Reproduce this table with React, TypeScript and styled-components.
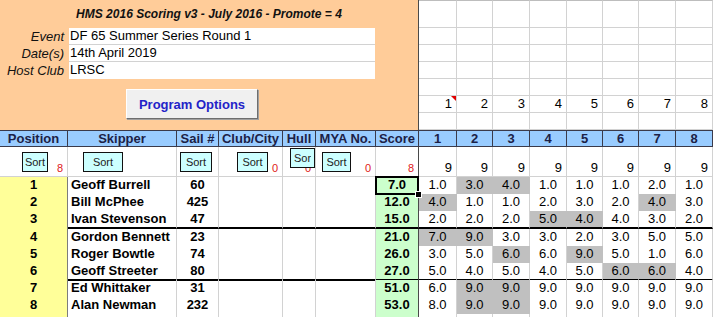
import React from "react";
import styled, { createGlobalStyle } from "styled-components";

const GRID = "#d2d2d2";
const FREEZE = "#4a4a4a";
const HEAD_LINE = "#3a3a4a";

const INFO_WIDTHS = [68, 109, 42, 64, 33, 60, 43];
const RACE_WIDTHS = [38, 36, 37, 37, 36, 36, 37, 37];
const px = (ws: number[]) => ws.map((w) => `${w}px`).join(" ");
const ALL_COLUMNS = px([...INFO_WIDTHS, ...RACE_WIDTHS]);
const RACE_COLUMNS = px(RACE_WIDTHS);

const GlobalStyle = createGlobalStyle`
  html, body { margin: 0; padding: 0; background: #fff; }
  body {
    font-family: "Liberation Sans", Arial, Helvetica, sans-serif;
    font-size: 13px;
    color: #000;
  }
  #root { width: 713px; height: 317px; overflow: hidden; }
`;

const Sheet = styled.div`
  width: 713px;
  display: flex;
  flex-direction: column;
`;

/* ---------- event banner and race-number strip ---------- */

const Top = styled.div`
  display: flex;
  height: 130px;
`;

const Banner = styled.div`
  width: 419px;
  flex: none;
  box-sizing: border-box;
  background: #ffcc99;
  border-right: 1px solid ${FREEZE};
  display: flex;
  flex-direction: column;
`;

const Title = styled.div`
  height: 28px;
  display: flex;
  align-items: center;
  justify-content: center;
  font-weight: bold;
  font-style: italic;
  font-size: 12px;
  color: #111;
`;

const InfoForm = styled.div`
  display: grid;
  grid-template-columns: 69px 306px;
  grid-auto-rows: 17px;
`;

const InfoLabel = styled.div`
  font-style: italic;
  text-align: right;
  padding-right: 5px;
  line-height: 17px;
  color: #111;
`;

const InfoValue = styled.div<{ $last?: boolean }>`
  box-sizing: border-box;
  background: #fff;
  padding-left: 1px;
  line-height: 16px;
  border-bottom: 1px solid ${(p) => (p.$last ? "#fff" : GRID)};
`;

const ButtonRow = styled.div`
  padding: 10px 0 0 126px;
`;

const OptionsButton = styled.button`
  width: 132px;
  height: 30px;
  box-sizing: border-box;
  background: #f0f0f0;
  border: 1px solid;
  border-color: #ffffff #6e6e6e #6e6e6e #ffffff;
  box-shadow: 1px 1px 0 #a0a0a0;
  font-family: inherit;
  font-size: 13px;
  font-weight: bold;
  color: #2323c8;
  padding: 0;
`;

const RaceStrip = styled.div`
  flex: 1;
  display: grid;
  grid-template-columns: ${RACE_COLUMNS};
  grid-template-rows: 28px repeat(6, 17px);
`;

const StripCell = styled.div<{ $top?: boolean }>`
  position: relative;
  box-sizing: border-box;
  border-right: 1px solid ${GRID};
  border-bottom: 1px solid ${GRID};
  border-top: ${(p) => (p.$top ? `1px solid #bdbdbd` : "none")};
  text-align: right;
  padding-right: 4px;
  line-height: 16px;
`;

const CommentMark = styled.span`
  position: absolute;
  top: 0;
  right: 0;
  width: 0;
  height: 0;
  border-top: 5px solid #e00000;
  border-left: 5px solid transparent;
`;

/* ---------- column headings ---------- */

const HeadRow = styled.div`
  display: grid;
  grid-template-columns: ${ALL_COLUMNS};
  height: 17px;
  box-sizing: border-box;
  background: #99ccff;
  border-top: 1px solid ${HEAD_LINE};
  border-bottom: 1px solid ${HEAD_LINE};
`;

const HeadCell = styled.div`
  box-sizing: border-box;
  border-right: 1px solid ${HEAD_LINE};
  text-align: center;
  font-weight: bold;
  line-height: 15px;
  color: #1c2146;
  white-space: nowrap;
  overflow: hidden;
`;

/* ---------- sort buttons row ---------- */

const SortRow = styled.div`
  display: grid;
  grid-template-columns: ${ALL_COLUMNS};
  height: 30px;
  box-sizing: border-box;
  border-bottom: 1px solid ${GRID};
`;

const SortCell = styled.div<{ $edge?: string }>`
  position: relative;
  box-sizing: border-box;
  border-right: 1px solid ${(p) => p.$edge ?? GRID};
  display: flex;
  align-items: flex-start;
`;

const SortButton = styled.button<{ $w: number; $x: number; $y: number }>`
  position: relative;
  z-index: 1;
  width: ${(p) => p.$w}px;
  height: 20px;
  margin: ${(p) => p.$y}px 0 0 ${(p) => p.$x}px;
  box-sizing: border-box;
  background: #ccffff;
  border: 1px solid #111;
  padding: 0;
  font-family: inherit;
  font-size: 11px;
  color: #222;
  display: flex;
  align-items: center;
  justify-content: center;
  overflow: hidden;
`;

/* the Hull button is too narrow for its caption, so the caption is cut */
const ClippedLabel = styled.span<{ $w: number }>`
  display: block;
  width: ${(p) => p.$w}px;
  overflow: hidden;
  white-space: nowrap;
  margin-top: -1px;
`;

const Count = styled.span`
  position: absolute;
  right: 4px;
  bottom: 2px;
  font-size: 11px;
  line-height: 11px;
  color: #e01818;
`;

const Rounds = styled.div`
  box-sizing: border-box;
  border-right: 1px solid ${GRID};
  display: flex;
  align-items: flex-end;
  justify-content: flex-end;
  padding: 0 4px 1px 0;
  line-height: 15px;
`;

/* ---------- results ---------- */

const DataRow = styled.div<{ $h: number }>`
  display: grid;
  grid-template-columns: ${ALL_COLUMNS};
  height: ${(p) => p.$h}px;
`;

const Cell = styled.div<{ $sep?: boolean }>`
  box-sizing: border-box;
  border-right: 1px solid ${GRID};
  border-bottom: ${(p) => (p.$sep ? "2px solid #000" : "none")};
  line-height: 16px;
  white-space: nowrap;
  overflow: hidden;
`;

const PosCell = styled(Cell)`
  background: #ffff99;
  border-right-color: #7c7c7c;
  text-align: center;
  font-weight: bold;
`;

const NameCell = styled(Cell)`
  font-weight: bold;
  padding-left: 3px;
`;

const SailCell = styled(Cell)`
  font-weight: bold;
  text-align: center;
`;

const ScoreCell = styled(Cell)<{ $active?: boolean }>`
  position: relative;
  overflow: visible;
  z-index: ${(p) => (p.$active ? 2 : 0)};
  background: #ccffcc;
  border-right-color: ${FREEZE};
  text-align: center;
  font-weight: bold;

  &::before {
    content: "";
    display: ${(p) => (p.$active ? "block" : "none")};
    position: absolute;
    inset: -1px -1px -1px -1px;
    border: 2px solid #000;
  }
  &::after {
    content: "";
    display: ${(p) => (p.$active ? "block" : "none")};
    position: absolute;
    right: -4px;
    bottom: -4px;
    width: 5px;
    height: 5px;
    background: #000;
    border: 1px solid #fff;
  }
`;

const RaceCell = styled(Cell)<{ $shade?: boolean }>`
  text-align: center;
  background: ${(p) => (p.$shade ? "#c0c0c0" : "#fff")};
  border-right-color: ${(p) => (p.$shade ? "#c0c0c0" : GRID)};
`;

/* ---------- data ---------- */

type Sort = { w: number; x: number; y: number; count?: string; clip?: number };

const HEADINGS = ["Position", "Skipper", "Sail #", "Club/City", "Hull", "MYA No.", "Score"];

const SORTS: (Sort | null)[] = [
  { w: 26, x: 22, y: 5, count: "8" },
  { w: 40, x: 15, y: 5 },
  { w: 32, x: 3, y: 5 },
  { w: 31, x: 18, y: 5, count: "0" },
  { w: 26, x: 7, y: 1, count: "0", clip: 17 },
  { w: 29, x: 6, y: 5, count: "0" },
  null,
];

type Entry = { skipper: string; sail: string; score: string; races: string[]; dropped: number[] };

const RESULTS: Entry[] = [
  { skipper: "Geoff Burrell", sail: "60", score: "7.0", races: ["1.0", "3.0", "4.0", "1.0", "1.0", "1.0", "2.0", "1.0"], dropped: [1, 2] },
  { skipper: "Bill McPhee", sail: "425", score: "12.0", races: ["4.0", "1.0", "1.0", "2.0", "3.0", "2.0", "4.0", "3.0"], dropped: [0, 6] },
  { skipper: "Ivan Stevenson", sail: "47", score: "15.0", races: ["2.0", "2.0", "2.0", "5.0", "4.0", "4.0", "3.0", "2.0"], dropped: [3, 4] },
  { skipper: "Gordon Bennett", sail: "23", score: "21.0", races: ["7.0", "9.0", "3.0", "3.0", "2.0", "3.0", "5.0", "5.0"], dropped: [0, 1] },
  { skipper: "Roger Bowtle", sail: "74", score: "26.0", races: ["3.0", "5.0", "6.0", "6.0", "9.0", "5.0", "1.0", "6.0"], dropped: [2, 4] },
  { skipper: "Geoff Streeter", sail: "80", score: "27.0", races: ["5.0", "4.0", "5.0", "4.0", "5.0", "6.0", "6.0", "4.0"], dropped: [5, 6] },
  { skipper: "Ed Whittaker", sail: "31", score: "51.0", races: ["6.0", "9.0", "9.0", "9.0", "9.0", "9.0", "9.0", "9.0"], dropped: [1, 2] },
  { skipper: "Alan Newman", sail: "232", score: "53.0", races: ["8.0", "9.0", "9.0", "9.0", "9.0", "9.0", "9.0", "9.0"], dropped: [1, 2] },
];

const RACES = [1, 2, 3, 4, 5, 6, 7, 8];
const PROMOTION_BREAKS = [2, 5];

export default function App() {
  return (
    <>
      <GlobalStyle />
      <Sheet>
        <Top>
          <Banner>
            <Title>HMS 2016 Scoring v3 - July 2016 - Promote = 4</Title>
            <InfoForm>
              <InfoLabel>Event</InfoLabel>
              <InfoValue>DF 65 Summer Series Round 1</InfoValue>
              <InfoLabel>Date(s)</InfoLabel>
              <InfoValue>14th April 2019</InfoValue>
              <InfoLabel>Host Club</InfoLabel>
              <InfoValue $last>LRSC</InfoValue>
            </InfoForm>
            <ButtonRow>
              <OptionsButton>Program Options</OptionsButton>
            </ButtonRow>
          </Banner>
          <RaceStrip>
            {Array.from({ length: 7 }).map((_, row) =>
              RACES.map((r) => (
                <StripCell key={`${row}-${r}`} $top={row === 0}>
                  {row === 5 ? r : null}
                  {row === 5 && r === 1 ? <CommentMark /> : null}
                </StripCell>
              ))
            )}
          </RaceStrip>
        </Top>

        <HeadRow>
          {HEADINGS.map((h) => (
            <HeadCell key={h}>{h}</HeadCell>
          ))}
          {RACES.map((r) => (
            <HeadCell key={`r${r}`}>{r}</HeadCell>
          ))}
        </HeadRow>

        <SortRow>
          {SORTS.map((s, i) => (
            <SortCell key={i} $edge={i === 6 ? FREEZE : undefined}>
              {s && (
                <SortButton $w={s.w} $x={s.x} $y={s.y}>
                  {s.clip ? <ClippedLabel $w={s.clip}>Sort</ClippedLabel> : "Sort"}
                </SortButton>
              )}
              {i === 6 ? <Count>8</Count> : s?.count ? <Count>{s.count}</Count> : null}
            </SortCell>
          ))}
          {RACES.map((r) => (
            <Rounds key={`n${r}`}>9</Rounds>
          ))}
        </SortRow>

        {RESULTS.map((e, i) => {
          const sep = PROMOTION_BREAKS.includes(i);
          return (
            <DataRow key={e.skipper} $h={i === 2 ? 18 : 17}>
              <PosCell>{i + 1}</PosCell>
              <NameCell $sep={sep}>{e.skipper}</NameCell>
              <SailCell $sep={sep}>{e.sail}</SailCell>
              <Cell $sep={sep} />
              <Cell $sep={sep} />
              <Cell $sep={sep} />
              <ScoreCell $sep={sep} $active={i === 0}>
                {e.score}
              </ScoreCell>
              {e.races.map((v, k) => (
                <RaceCell key={k} $sep={sep} $shade={e.dropped.includes(k)}>
                  {v}
                </RaceCell>
              ))}
            </DataRow>
          );
        })}

        <DataRow $h={17}>
          <PosCell />
          <Cell />
          <Cell />
          <Cell />
          <Cell />
          <Cell />
          <ScoreCell />
          {RACES.map((r) => (
            <RaceCell key={r} />
          ))}
        </DataRow>
      </Sheet>
    </>
  );
}
